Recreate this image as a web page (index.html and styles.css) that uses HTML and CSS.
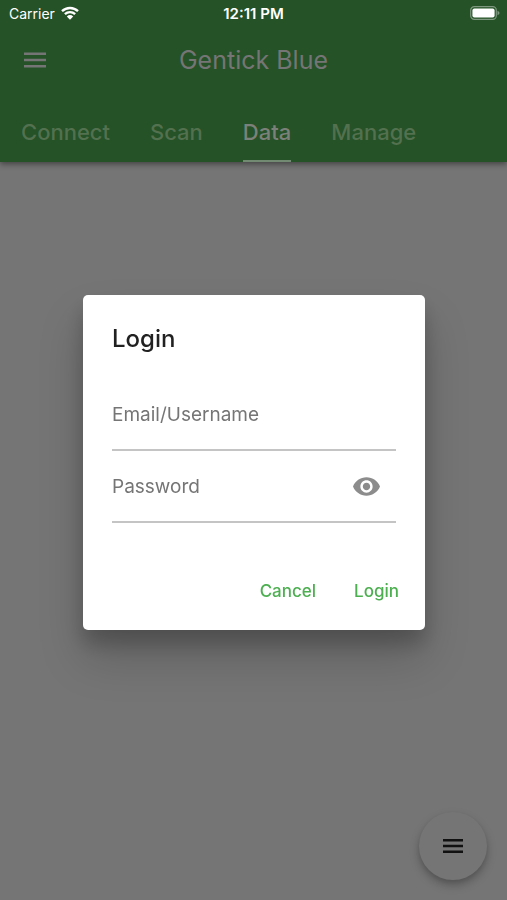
FILE: index.html
```html
<!DOCTYPE html>
<html lang="en">
<head>
<meta charset="utf-8">
<meta name="viewport" content="width=device-width, initial-scale=1">
<title>Gentick Blue</title>
<link rel="stylesheet" href="styles.css">
</head>
<body>
<header class="app-header">
  <div class="status-bar">
    <span class="carrier">Carrier
      <svg class="wifi" viewBox="0 0 18 14" aria-hidden="true">
        <path d="M1 5.2a11.6 11.6 0 0 1 16 0M3.9 8.2a7.4 7.4 0 0 1 10.2 0" fill="none" stroke="currentColor" stroke-width="2.4"/>
        <path d="M5.8 10.4a4.7 4.7 0 0 1 6.4 0L9 13.7z" fill="currentColor"/>
      </svg>
    </span>
    <time class="clock">12:11 PM</time>
    <svg class="battery" viewBox="0 0 30 14" aria-hidden="true">
      <rect x=".7" y=".7" width="25.6" height="12.6" rx="3.6" fill="none" stroke="#7d987e" stroke-width="1.2"/>
      <rect x="2.4" y="2.4" width="22.2" height="9.2" rx="2" fill="#fff"/>
      <path d="M27.5 4.8q2 .8 2 2.2t-2 2.2z" fill="#7d987e"/>
    </svg>
  </div>
  <div class="toolbar">
    <button class="menu-button" type="button" aria-label="Open menu">
      <svg viewBox="0 0 24 16" aria-hidden="true"><path d="M1 1.8h22M1 8h22M1 14.2h22" stroke="currentColor" stroke-width="2.5"/></svg>
    </button>
    <h1 class="app-title">Gentick Blue</h1>
  </div>
  <nav class="tabs">
    <a class="tab" href="#connect">Connect</a>
    <a class="tab" href="#scan">Scan</a>
    <a class="tab tab-active" href="#data" aria-current="page">Data</a>
    <a class="tab" href="#manage">Manage</a>
  </nav>
</header>

<button class="fab" type="button" aria-label="Actions">
  <svg viewBox="0 0 22 16" aria-hidden="true"><path d="M1 2.2h20M1 8h20M1 13.8h20" stroke="currentColor" stroke-width="2.4"/></svg>
</button>

<div class="overlay">
  <form class="dialog" role="dialog" aria-labelledby="login-title">
    <h2 class="dialog-title" id="login-title">Login</h2>
    <div class="field">
      <input class="field-input" type="text" placeholder="Email/Username" aria-label="Email/Username">
    </div>
    <div class="field">
      <input class="field-input" type="password" placeholder="Password" aria-label="Password">
      <button class="reveal" type="button" aria-label="Show password">
        <svg viewBox="1 4.5 22 15" aria-hidden="true"><path fill="currentColor" d="M12 4.5C7 4.5 2.73 7.61 1 12c1.73 4.39 6 7.5 11 7.5s9.27-3.11 11-7.5c-1.73-4.39-6-7.5-11-7.5zM12 17c-2.76 0-5-2.24-5-5s2.24-5 5-5 5 2.24 5 5-2.24 5-5 5zm0-8c-1.66 0-3 1.34-3 3s1.34 3 3 3 3-1.34 3-3-1.34-3-3-3z"/></svg>
      </button>
    </div>
    <div class="actions">
      <button class="action" type="button">Cancel</button>
      <button class="action" type="submit">Login</button>
    </div>
  </form>
</div>
</body>
</html>
```
FILE: styles.css
```css
* {
  box-sizing: border-box;
}

body {
  margin: 0;
  min-height: 100vh;
  background: #757575;
  font-family: Inter, "Liberation Sans", sans-serif;
}

button {
  padding: 0;
  border: 0;
  background: none;
  font-family: inherit;
}

svg {
  display: block;
}

.app-header {
  background: #255227;
  box-shadow: 0 2px 6px rgba(0, 0, 0, 0.45);
}

.status-bar {
  display: grid;
  grid-template-columns: 1fr auto 1fr;
  align-items: center;
  height: 26px;
  padding: 0 7px;
  color: #fff;
  font-size: 14px;
}

.carrier {
  display: flex;
  align-items: center;
  gap: 6px;
  padding-left: 2px;
}

.wifi {
  width: 18px;
  height: 14px;
}

.clock {
  font-size: 15px;
  font-weight: 600;
}

.battery {
  justify-self: end;
  width: 30px;
  height: 14px;
}

.toolbar {
  display: grid;
  grid-template-columns: 24px 1fr 24px;
  align-items: center;
  height: 68px;
  padding: 0 23px;
  color: #757575;
}

.menu-button {
  color: inherit;
}

.app-title {
  margin: 0;
  font-size: 25px;
  font-weight: 400;
  text-align: center;
}

.tabs {
  display: flex;
  gap: 40px;
  height: 68px;
  padding: 10px 21px 0;
}

.tab {
  display: flex;
  align-items: center;
  border-bottom: 2px solid transparent;
  color: #53704f;
  font-size: 22px;
  font-weight: 500;
  text-decoration: none;
}

.tab-active {
  border-color: #728a72;
  color: #7b817a;
}

.fab {
  position: fixed;
  right: 20px;
  bottom: 20px;
  display: grid;
  place-items: center;
  width: 68px;
  height: 68px;
  border-radius: 50%;
  background: #757575;
  color: #111;
  box-shadow: 0 5px 10px rgba(0, 0, 0, 0.26), 0 2px 5px rgba(0, 0, 0, 0.08);
}

.fab svg {
  width: 22px;
  height: 16px;
}

.overlay {
  position: fixed;
  inset: 0;
  display: grid;
  grid-template-columns: minmax(0, 1fr);
  align-items: center;
  padding: 25px 82px 0 83px;
}

.dialog {
  padding: 28px 29px 16px;
  border-radius: 5px;
  background: #fff;
  box-shadow: 0 14px 20px rgba(0, 0, 0, 0.2), 0 28px 46px rgba(0, 0, 0, 0.18);
}

.dialog-title {
  margin: 0 0 24px;
  color: #212121;
  font-size: 24px;
  font-weight: 500;
  line-height: 32px;
}

.field {
  display: flex;
  align-items: center;
  height: 72px;
  border-bottom: 2px solid #c4c4c4;
}

.field-input {
  flex: 1;
  min-width: 0;
  padding: 0;
  border: 0;
  outline: 0;
  background: none;
  color: #212121;
  font-family: inherit;
  font-size: 19px;
}

.field-input::placeholder {
  color: #757575;
}

.reveal {
  padding: 0 16px;
  color: #8c8c8c;
}

.reveal svg {
  width: 27px;
  height: 19px;
}

.actions {
  display: flex;
  justify-content: flex-end;
  gap: 38px;
  margin: 45px -3px 0 0;
}

.action {
  height: 46px;
  color: #4caf50;
  font-size: 17px;
  font-weight: 500;
}
```
